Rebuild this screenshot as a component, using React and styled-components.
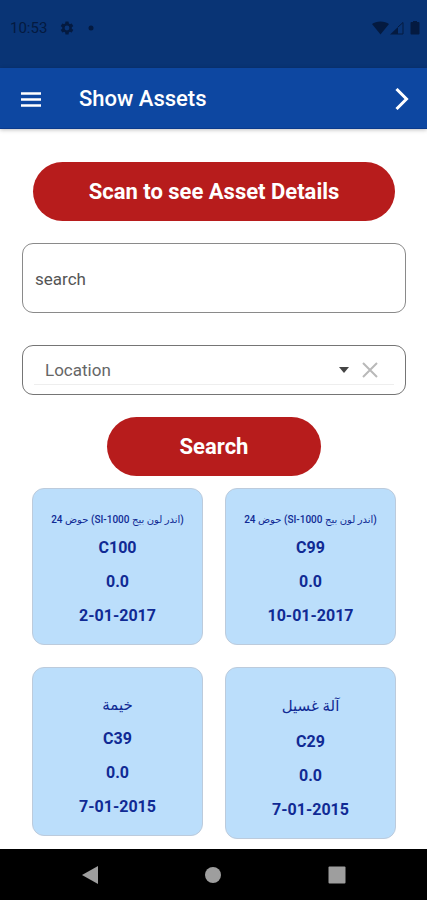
import React, { useState } from 'react';
import styled, { createGlobalStyle } from 'styled-components';

const assets = [
  { code: 'C100', name: '(اندر لون بيج SI-1000) حوض 24', value: '0.0', date: '2-01-2017', size: 'small' },
  { code: 'C99', name: '(اندر لون بيج SI-1000) حوض 24', value: '0.0', date: '10-01-2017', size: 'small' },
  { code: 'C39', name: 'خيمة', value: '0.0', date: '7-01-2015', size: 'medium' },
  { code: 'C29', name: 'آلة غسيل', value: '0.0', date: '7-01-2015', size: 'large' },
];

const nameSizes = {
  small: { font: 10, line: 22 },
  medium: { font: 15, line: 34 },
  large: { font: 15, line: 37 },
};

function StatusBar() {
  return (
    <StatusBarStyled>
      <div className="group">
        <span>10:53</span>
        <svg width="16" height="16" viewBox="0 0 24 24" fill="currentColor">
          <path d="M19.14 12.94c.04-.3.06-.61.06-.94s-.02-.64-.07-.94l2.03-1.58a.49.49 0 0 0 .12-.61l-1.92-3.32a.49.49 0 0 0-.59-.22l-2.39.96a7 7 0 0 0-1.62-.94l-.36-2.54a.48.48 0 0 0-.48-.41h-3.84a.48.48 0 0 0-.47.41l-.36 2.54a7.3 7.3 0 0 0-1.62.94l-2.39-.96a.48.48 0 0 0-.59.22L2.74 8.87a.48.48 0 0 0 .12.61l2.03 1.58a6 6 0 0 0 0 1.88l-2.03 1.58a.49.49 0 0 0-.12.61l1.92 3.32c.12.22.37.29.59.22l2.39-.96c.5.38 1.03.7 1.62.94l.36 2.54c.05.24.24.41.48.41h3.84c.24 0 .44-.17.47-.41l.36-2.54a7 7 0 0 0 1.62-.94l2.39.96c.22.08.47 0 .59-.22l1.92-3.32a.48.48 0 0 0-.12-.61zM12 15.6a3.6 3.6 0 1 1 0-7.2 3.6 3.6 0 0 1 0 7.2" />
        </svg>
        <svg width="16" height="16" viewBox="0 0 16 16" fill="currentColor">
          <circle cx="8" cy="8" r="2.5" />
        </svg>
      </div>
      <svg width="50" height="16" viewBox="0 0 50 16" fill="currentColor">
        <path d="M1 4C5 .6 14 .6 18 4L9.500 14.500z" />
        <path d="M19 14.500 27 7v7.500z" />
        <path d="M27 7 32 2.500V14H27" fill="none" stroke="currentColor" strokeWidth="1" />
        <path d="M42 1h4v1h1.500q1 0 1 1v10.500q0 1-1 1h-7q-1 0-1-1V3q0-1 1-1H42z" />
      </svg>
    </StatusBarStyled>
  );
}

function AssetCard({ asset }) {
  return (
    <Card>
      <CardName dir="rtl" $size={nameSizes[asset.size]}>{asset.name}</CardName>
      <CardLine>{asset.code}</CardLine>
      <CardLine>{asset.value}</CardLine>
      <CardLine>{asset.date}</CardLine>
    </Card>
  );
}

function App() {
  const [search, setSearch] = useState('');
  const [location, setLocation] = useState('');

  return (
    <Screen>
      <GlobalStyle />
      <StatusBar />
      <AppBar>
        <IconButton aria-label="Menu">
          <svg width="20" height="16" viewBox="0 0 20 16" stroke="currentColor" strokeWidth="2.4">
            <path d="M0 2.500h20M0 8.500h20M0 14.500h20" />
          </svg>
        </IconButton>
        <h1>Show Assets</h1>
        <IconButton aria-label="Next">
          <svg width="14" height="22" viewBox="0 0 14 22" fill="none" stroke="currentColor" strokeWidth="3">
            <path d="M1.500 1 11.500 11 1.500 21" />
          </svg>
        </IconButton>
      </AppBar>

      <Content>
        <WideButton type="button">Scan to see Asset Details</WideButton>
        <SearchInput
          type="text"
          aria-label="search"
          placeholder="search"
          value={search}
          onChange={(e) => setSearch(e.target.value)}
        />
        <LocationBox>
          <div className="inner">
            <select aria-label="Location" value={location} onChange={(e) => setLocation(e.target.value)}>
              <option value="">Location</option>
            </select>
            <svg width="10" height="6" viewBox="0 0 10 6" fill="#444">
              <path d="M0 0h10L5 6z" />
            </svg>
            <IconButton aria-label="Clear location" onClick={() => setLocation('')}>
              <svg width="16" height="16" viewBox="0 0 16 16" stroke="#b9b9b9" strokeWidth="2">
                <path d="M1 1l14 14M15 1 1 15" />
              </svg>
            </IconButton>
          </div>
        </LocationBox>
        <SearchButton type="button">Search</SearchButton>

        <Grid>
          {assets.map((asset) => (
            <AssetCard key={asset.code} asset={asset} />
          ))}
        </Grid>
      </Content>

      <NavBar>
        <IconButton aria-label="Back">
          <svg width="18" height="18" viewBox="0 0 18 18" fill="currentColor">
            <path d="M17 0v18L1 9z" />
          </svg>
        </IconButton>
        <IconButton aria-label="Home">
          <svg width="18" height="18" viewBox="0 0 18 18" fill="currentColor">
            <circle cx="9" cy="9" r="8" />
          </svg>
        </IconButton>
        <IconButton aria-label="Recent apps">
          <svg width="18" height="18" viewBox="0 0 18 18" fill="currentColor">
            <rect x="0.500" y="0.500" width="17" height="17" rx="1" />
          </svg>
        </IconButton>
      </NavBar>
    </Screen>
  );
}

const GlobalStyle = createGlobalStyle`
  * {
    box-sizing: border-box;
  }

  body {
    margin: 0;
    background: #fff;
    font-family: Roboto, 'DejaVu Sans', sans-serif;
  }

  button, input, select {
    font-family: inherit;
  }
`;

const Screen = styled.div`
  display: flex;
  flex-direction: column;
  min-height: 100vh;
`;

const StatusBarStyled = styled.div`
  display: flex;
  align-items: center;
  justify-content: space-between;
  padding: 19px 6px 31px 10px;
  background: #093475;
  color: #041a40;

  .group {
    display: flex;
    align-items: center;
    gap: 12px;
    font-size: 15px;
    line-height: 18px;
  }

  .group svg + svg {
    margin-left: -4px;
  }
`;

const AppBar = styled.header`
  display: flex;
  align-items: center;
  height: 61px;
  padding: 1px 18px 0 21px;
  background: #0d47a1;
  color: #fff;
  border-bottom: 1px solid #0a3a8c;
  box-shadow: 0 1px 4px rgba(0, 0, 0, 0.25);

  h1 {
    flex: 1;
    margin: 0 0 0 38px;
    font-size: 22px;
    font-weight: 500;
  }
`;

const IconButton = styled.button`
  display: flex;
  align-items: center;
  justify-content: center;
  padding: 0;
  border: none;
  background: none;
  color: inherit;
  cursor: pointer;
`;

const Content = styled.main`
  display: flex;
  flex: 1;
  flex-direction: column;
  padding: 33px 21px 9px 22px;
`;

const PillButton = styled.button`
  height: 59px;
  border: none;
  border-radius: 30px;
  background: #b71c1c;
  color: #fff;
  font-size: 22px;
  font-weight: 700;
  cursor: pointer;
`;

const WideButton = styled(PillButton)`
  margin: 0 11px;
`;

const SearchButton = styled(PillButton)`
  align-self: center;
  margin-top: 22px;
  padding: 0 73px;
`;

const SearchInput = styled.input`
  height: 70px;
  margin-top: 22px;
  padding: 2px 12px 0;
  border: 1px solid #8a8a8a;
  border-radius: 11px;
  background: #fff;
  color: #222;
  font-size: 17px;

  &::placeholder {
    color: #555;
    opacity: 1;
  }
`;

const LocationBox = styled.div`
  height: 50px;
  margin-top: 32px;
  padding: 10px 11px;
  border: 1px solid #757575;
  border-radius: 11px;

  .inner {
    display: flex;
    align-items: center;
    height: 29px;
    padding: 0 16px 0 11px;
    border-bottom: 1px solid #eee;
  }

  select {
    flex: 1;
    padding: 0;
    border: none;
    background: none;
    appearance: none;
    color: #666;
    font-size: 17px;
  }

  .inner button {
    margin-left: 13px;
  }
`;

const Grid = styled.div`
  display: grid;
  grid-template-columns: 1fr 1fr;
  align-items: start;
  gap: 22px;
  margin: 12px 10px 0;
`;

const Card = styled.article`
  padding: 20px 8px 11px;
  border: 1px solid #bccbdc;
  border-radius: 12px;
  background: #bbdefb;
  color: #102a94;
  text-align: center;
`;

const CardName = styled.div`
  font-size: ${({ $size }) => $size.font}px;
  line-height: ${({ $size }) => $size.line}px;
  font-weight: 500;
  white-space: nowrap;
`;

const CardLine = styled.div`
  font-size: 16px;
  line-height: 34px;
  font-weight: 700;
`;

const NavBar = styled.nav`
  display: grid;
  grid-template-columns: repeat(3, 1fr);
  height: 51px;
  padding: 0 28px;
  background: #000;
  color: #9e9e9e;
`;

export default App;
